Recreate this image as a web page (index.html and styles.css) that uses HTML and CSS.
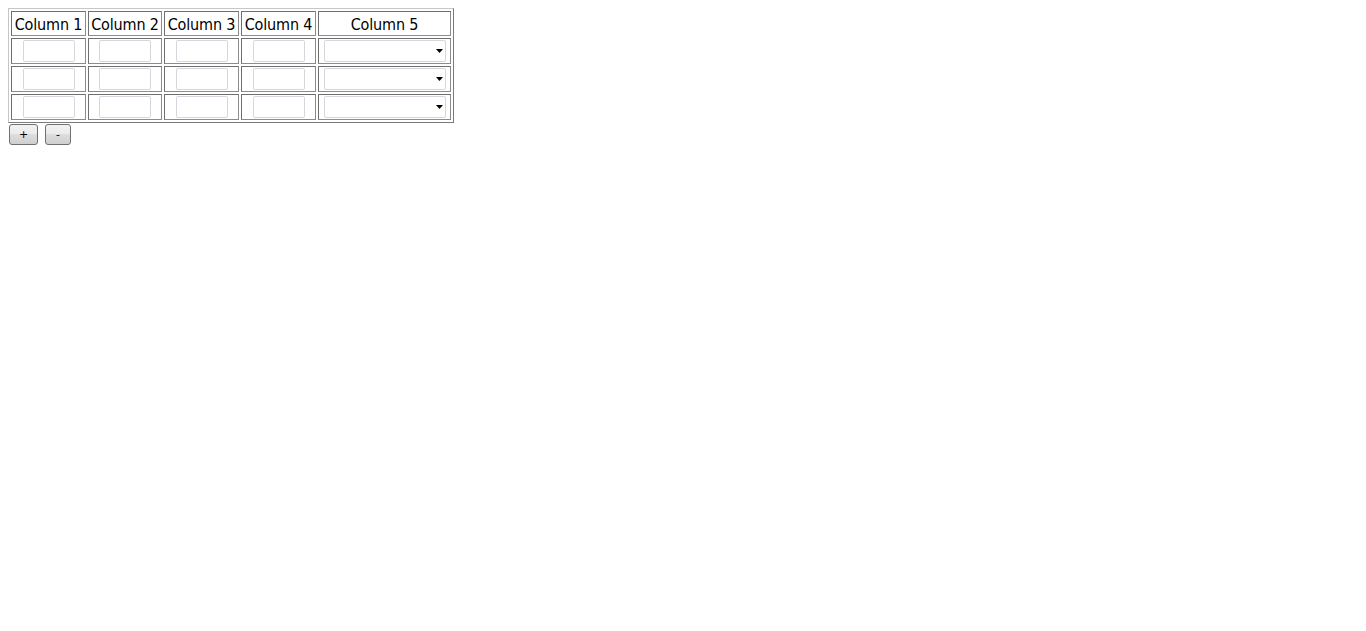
FILE: index.html
```html
<!DOCTYPE html>
<html lang="en">
<head>
  <meta charset="UTF-8" />
  <title>Rows</title>
  <link rel="stylesheet" href="styles.css">
</head>
<body>

  <table class="grid" id="grid">
    <thead>
      <tr>
        <th class="c1">Column 1</th>
        <th class="c2">Column 2</th>
        <th class="c3">Column 3</th>
        <th class="c4">Column 4</th>
        <th class="c5">Column 5</th>
      </tr>
    </thead>
    <tbody>
      <tr>
        <td><input type="text" /></td>
        <td><input type="text" /></td>
        <td><input type="text" /></td>
        <td><input type="text" /></td>
        <td><span class="pick"><select></select><svg width="7" height="4" viewBox="0 0 7 4"><path d="M0 0h7L3.5 4z"/></svg></span></td>
      </tr>
      <tr>
        <td><input type="text" /></td>
        <td><input type="text" /></td>
        <td><input type="text" /></td>
        <td><input type="text" /></td>
        <td><span class="pick"><select></select><svg width="7" height="4" viewBox="0 0 7 4"><path d="M0 0h7L3.5 4z"/></svg></span></td>
      </tr>
      <tr>
        <td><input type="text" /></td>
        <td><input type="text" /></td>
        <td><input type="text" /></td>
        <td><input type="text" /></td>
        <td><span class="pick"><select></select><svg width="7" height="4" viewBox="0 0 7 4"><path d="M0 0h7L3.5 4z"/></svg></span></td>
      </tr>
    </tbody>
  </table>

  <div class="actions">
    <button type="button" class="btn add">+</button>
    <button type="button" class="btn remove">-</button>
  </div>

</body>
</html>
```

FILE: styles.css
```css
body {
  margin: 8px;
  font-family: "DejaVu Sans Condensed", "DejaVu Sans", sans-serif;
  font-stretch: condensed;
  font-size: 16px;
  color: #000;
  background: #fff;
}

.grid {
  table-layout: fixed;
  width: 446px;
  border-collapse: separate;
  border-spacing: 2px;
  border: 1px solid;
  border-color: #c6c6c6 #7a7a7a #7a7a7a #c6c6c6;
}

.grid th,
.grid td {
  box-sizing: border-box;
  border: 1px solid #6f6f6f;
  border-right-color: #8c8c8c;
  border-bottom-color: #8c8c8c;
  padding: 0;
  text-align: center;
  vertical-align: middle;
  white-space: nowrap;
}

.grid th {
  height: 25px;
  padding-top: 2px;
  font-weight: normal;
  line-height: 20px;
  letter-spacing: -0.15px;
}

.grid td {
  height: 26px;
}

.c1 { width: 75px; }
.c2 { width: 74px; }
.c3 { width: 75px; }
.c4 { width: 75px; }
.c5 { width: 133px; }

.grid input {
  display: block;
  box-sizing: border-box;
  width: 52px;
  height: 22px;
  margin: 0 auto;
  border: 1px solid #d6d6de;
  border-radius: 2px;
  background: #fff;
  outline: none;
}

.pick {
  position: relative;
  display: block;
  width: 122px;
  height: 22px;
  margin: 0 auto;
}

.pick select {
  display: block;
  box-sizing: border-box;
  width: 100%;
  height: 22px;
  margin: 0;
  border: 1px solid #d6d6de;
  border-radius: 2px;
  background: #fff;
  appearance: none;
  -webkit-appearance: none;
  outline: none;
}

.pick svg {
  position: absolute;
  right: 3px;
  top: 9px;
  pointer-events: none;
}

.actions {
  display: flex;
  gap: 7px;
  margin: 1px 0 0 1px;
}

.btn {
  box-sizing: border-box;
  height: 21px;
  padding: 0;
  border: 1px solid #707070;
  border-radius: 3px;
  background: linear-gradient(#f2f2f2 0%, #ebebeb 45%, #dddddd 50%, #cfcfcf 100%);
  font-family: "DejaVu Sans", sans-serif;
  font-size: 11px;
  color: #000;
  cursor: pointer;
}

.btn.add { width: 29px; }
.btn.remove { width: 26px; }
```
